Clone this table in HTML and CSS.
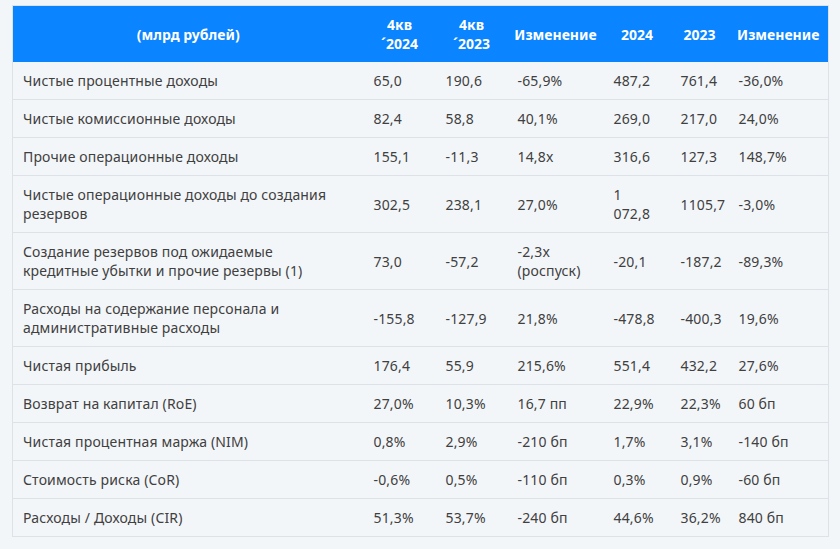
FILE: index.html
```html
<!DOCTYPE html>
<html lang="ru">
<head>
<meta charset="utf-8">
<link rel="stylesheet" href="styles.css">
</head>
<body>
<div class="wrap">
<table class="fin">
<colgroup>
<col class="c1"><col class="c2"><col class="c3"><col class="c4"><col class="c5"><col class="c6"><col class="c7">
</colgroup>
<thead>
<tr>
<th>(млрд рублей)</th>
<th>4кв<br>´2024</th>
<th>4кв<br>´2023</th>
<th>Изменение</th>
<th>2024</th>
<th>2023</th>
<th>Изменение</th>
</tr>
</thead>
<tbody>
<tr><td>Чистые процентные доходы</td><td>65,0</td><td>190,6</td><td>-65,9%</td><td>487,2</td><td>761,4</td><td>-36,0%</td></tr>
<tr><td>Чистые комиссионные доходы</td><td>82,4</td><td>58,8</td><td>40,1%</td><td>269,0</td><td>217,0</td><td>24,0%</td></tr>
<tr><td>Прочие операционные доходы</td><td>155,1</td><td>-11,3</td><td>14,8x</td><td>316,6</td><td>127,3</td><td>148,7%</td></tr>
<tr><td>Чистые операционные доходы до создания резервов</td><td>302,5</td><td>238,1</td><td>27,0%</td><td>1<br>072,8</td><td>1105,7</td><td>-3,0%</td></tr>
<tr><td>Создание резервов под ожидаемые<br>кредитные убытки и прочие резервы (1)</td><td>73,0</td><td>-57,2</td><td>-2,3x<br>(роспуск)</td><td>-20,1</td><td>-187,2</td><td>-89,3%</td></tr>
<tr><td>Расходы на содержание персонала и<br>административные расходы</td><td>-155,8</td><td>-127,9</td><td>21,8%</td><td>-478,8</td><td>-400,3</td><td>19,6%</td></tr>
<tr><td>Чистая прибыль</td><td>176,4</td><td>55,9</td><td>215,6%</td><td>551,4</td><td>432,2</td><td>27,6%</td></tr>
<tr><td>Возврат на капитал (RoE)</td><td>27,0%</td><td>10,3%</td><td>16,7 пп</td><td>22,9%</td><td>22,3%</td><td>60 бп</td></tr>
<tr><td>Чистая процентная маржа (NIM)</td><td>0,8%</td><td>2,9%</td><td>-210 бп</td><td>1,7%</td><td>3,1%</td><td>-140 бп</td></tr>
<tr><td>Стоимость риска (CoR)</td><td>-0,6%</td><td>0,5%</td><td>-110 бп</td><td>0,3%</td><td>0,9%</td><td>-60 бп</td></tr>
<tr><td>Расходы / Доходы (CIR)</td><td>51,3%</td><td>53,7%</td><td>-240 бп</td><td>44,6%</td><td>36,2%</td><td>840 бп</td></tr>
</tbody>
</table>
</div>
</body>
</html>
```
FILE: styles.css
```css
html, body {
  margin: 0;
  padding: 0;
  background: #f3f6f9;
}
body {
  font-family: "Noto Sans", "Open Sans", sans-serif;
  font-size: 14px;
  color: #404040;
}
.wrap {
  padding: 5px 12px 0 12px;
}
.fin {
  width: 816px;
  table-layout: fixed;
  border-collapse: collapse;
  border: 1px solid #dde2e8;
}
.c1 { width: 351px; }
.c2 { width: 72px; }
.c3 { width: 72px; }
.c4 { width: 96px; }
.c5 { width: 67px; }
.c6 { width: 58px; }
.c7 { width: 100px; }
.fin th {
  background: #0a84ff;
  color: #ffffff;
  font-weight: 700;
  text-align: center;
  line-height: 19px;
  padding: 9px 4px;
}
.fin td {
  line-height: 19px;
  padding: 9px 6px 9px 10px;
  border-bottom: 1px solid #dde2e8;
  vertical-align: middle;
  letter-spacing: 0.15px;
}
.fin tr:last-child td {
  border-bottom: none;
}
```
